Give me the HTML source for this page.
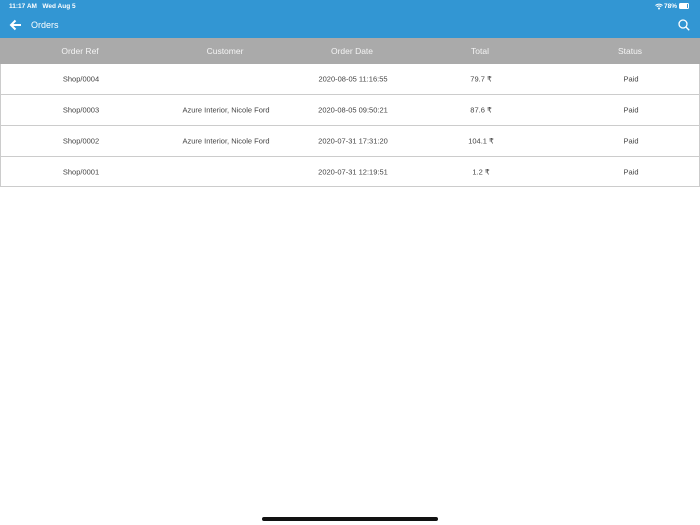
<!DOCTYPE html>
<html><head><style>
*{margin:0;padding:0;box-sizing:border-box}
body{width:700px;height:525px;background:#fff;font-family:"Liberation Sans",sans-serif;position:relative;overflow:hidden}
.bar{position:absolute;left:0;top:0;width:700px;height:38px;background:#3296d3;color:#fff}
.st{position:absolute;top:3px;font-size:6.5px;font-weight:bold}
.th{position:absolute;top:38px;left:0;width:700px;height:26px;background:#aaa;color:#f4f4f4;font-size:8.5px}
.c{position:absolute;transform:translate(-50%,-50%);white-space:nowrap}
.row{position:absolute;left:0;width:700px;height:31px;border:1px solid #ccc;border-top:none;font-size:7.5px;color:#444}
</style></head><body>
<div class="bar">
<div class="st" style="left:9px">11:17 AM&nbsp;&nbsp; Wed Aug 5</div>
<div class="st" style="left:664px;top:3px">78%</div>
<svg style="position:absolute;left:655px;top:3px" width="8" height="7" viewBox="0 0 8 7"><path d="M0.5 2.5 A5 5 0 0 1 7.5 2.5 M1.8 3.8 A3.2 3.2 0 0 1 6.2 3.8" stroke="#fff" stroke-width="1" fill="none"/><circle cx="4" cy="5.5" r="1" fill="#fff"/></svg>
<div style="position:absolute;left:679px;top:3px;width:10px;height:6px;border:1px solid #fff;border-radius:1.5px"><div style="width:7px;height:4px;background:#fff"></div></div>
<svg style="position:absolute;left:9px;top:19px" width="13" height="12" viewBox="0 0 13 12"><path d="M12 6H2M6.5 1.5L2 6l4.5 4.5" stroke="#fff" stroke-width="2" fill="none"/></svg>
<div style="position:absolute;left:31px;top:20px;font-size:9px">Orders</div>
<svg style="position:absolute;left:678px;top:19px" width="12" height="12" viewBox="0 0 12 12"><circle cx="5" cy="5" r="4" stroke="#fff" stroke-width="1.3" fill="none"/><path d="M8 8l3.2 3.2" stroke="#fff" stroke-width="1.4"/></svg>
</div>
<div class="th">
<div class="c" style="left:80px;top:13px">Order Ref</div>
<div class="c" style="left:225px;top:13px">Customer</div>
<div class="c" style="left:352px;top:13px">Order Date</div>
<div class="c" style="left:480px;top:13px">Total</div>
<div class="c" style="left:630px;top:13px">Status</div>
</div>
<div class="row" style="top:64px"><div class="c" style="left:80px;top:15px">Shop/0004</div><div class="c" style="left:352px;top:15px">2020-08-05 11:16:55</div><div class="c" style="left:480px;top:15px">79.7 ₹</div><div class="c" style="left:630px;top:15px">Paid</div></div>
<div class="row" style="top:95px"><div class="c" style="left:80px;top:15px">Shop/0003</div><div class="c" style="left:225px;top:15px">Azure Interior, Nicole Ford</div><div class="c" style="left:352px;top:15px">2020-08-05 09:50:21</div><div class="c" style="left:480px;top:15px">87.6 ₹</div><div class="c" style="left:630px;top:15px">Paid</div></div>
<div class="row" style="top:126px"><div class="c" style="left:80px;top:15px">Shop/0002</div><div class="c" style="left:225px;top:15px">Azure Interior, Nicole Ford</div><div class="c" style="left:352px;top:15px">2020-07-31 17:31:20</div><div class="c" style="left:480px;top:15px">104.1 ₹</div><div class="c" style="left:630px;top:15px">Paid</div></div>
<div class="row" style="top:157px;height:30px"><div class="c" style="left:80px;top:15px">Shop/0001</div><div class="c" style="left:352px;top:15px">2020-07-31 12:19:51</div><div class="c" style="left:480px;top:15px">1.2 ₹</div><div class="c" style="left:630px;top:15px">Paid</div></div>
<div style="position:absolute;left:262px;top:517px;width:176px;height:4px;border-radius:2px;background:#111"></div>
</body></html>
